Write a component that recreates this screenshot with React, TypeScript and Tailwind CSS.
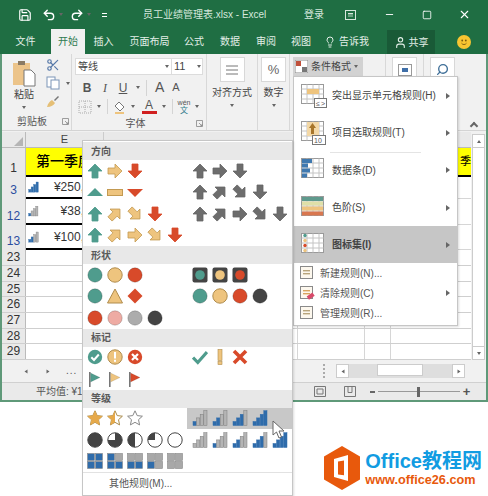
import type { ReactNode } from 'react';
import { Lightbulb, Minus, Redo2, Save, Scissors, Search, Square, Undo2, User, X } from 'lucide-react';

const GREEN = '#4f9c8d';
const YELLOW = '#eec47e';
const RED = '#d84a2a';
const GREY = '#6d6d6d';
const BLUE = '#2f6cab';

const fontCjk = 'font-["Liberation_Sans","Noto_Sans_CJK_SC",sans-serif]';

const Caret = () => <span className="inline-block w-0 h-0 border-x-[2.5px] border-x-transparent border-t-[3px] border-t-[#666]" />;
const SideCaret = () => <span className="inline-block w-0 h-0 border-y-[3px] border-y-transparent border-l-[4px] border-l-[#666]" />;

const Arrow = ({ color, deg = 0 }: { color: string; deg?: number }) => {
  const edge = color === YELLOW ? '#c39a52' : color === GREY ? '#666' : color;
  return (
    <svg width="16" height="16" viewBox="0 0 16 16">
      <polygon
        points="8,1 15,8 11,8 11,15 5,15 5,8 1,8"
        fill={color}
        stroke={edge}
        strokeWidth="0.8"
        transform={'rotate(' + deg + ' 8 8)'}
      />
    </svg>
  );
};

const Tri = ({ color, down }: { color: string; down?: boolean }) => (
  <svg width="16" height="16" viewBox="0 0 16 16">
    <polygon points={down ? '0,5 16,5 8,13' : '8,4 16,12 0,12'} fill={color} />
  </svg>
);

const Dash = () => (
  <svg width="16" height="16" viewBox="0 0 16 16">
    <rect x="0.5" y="5.5" width="15" height="6" fill={YELLOW} stroke="#c39a52" />
  </svg>
);

const Dot = ({ color, edge = '#00000030' }: { color: string; edge?: string }) => (
  <svg width="16" height="16" viewBox="0 0 16 16">
    <circle cx="8" cy="8" r="7.2" fill={color} stroke={edge} strokeWidth="1" />
  </svg>
);

const Light = ({ color }: { color: string }) => (
  <svg width="16" height="16" viewBox="0 0 16 16">
    <rect x="0.5" y="0.5" width="15" height="15" rx="2" fill="#444" />
    <circle cx="8" cy="8" r="4.8" fill={color} />
  </svg>
);

const Flag = ({ color }: { color: string }) => (
  <svg width="14" height="16" viewBox="0 0 14 16">
    <rect x="1" y="1" width="1.6" height="15" fill="#777" />
    <polygon points="2.6,2 12,6.5 2.6,11" fill={color} stroke="#00000030" strokeWidth="0.5" />
  </svg>
);

const Star = ({ fill }: { fill: 'full' | 'half' | 'none' }) => (
  <svg width="16" height="16" viewBox="0 0 16 16">
    <polygon points="8,0.8 10.2,5.6 15.4,6.2 11.5,9.7 12.6,14.9 8,12.3 3.4,14.9 4.5,9.7 0.6,6.2 5.8,5.6" fill="#fff" stroke={fill === 'none' ? '#888' : '#a98a4a'} />
    {fill === 'full' && <polygon points="8,0.8 10.2,5.6 15.4,6.2 11.5,9.7 12.6,14.9 8,12.3 3.4,14.9 4.5,9.7 0.6,6.2 5.8,5.6" fill="#e6a94a" />}
    {fill === 'half' && <polygon points="8,0.8 8,12.3 3.4,14.9 4.5,9.7 0.6,6.2 5.8,5.6" fill="#e6a94a" />}
  </svg>
);

const Harvey = ({ d }: { d: string | null }) => (
  <svg width="16" height="16" viewBox="0 0 16 16">
    <circle cx="8" cy="8" r="7.2" fill={d === 'full' ? '#444' : '#fff'} stroke="#444" />
    {d && d !== 'full' && <path d={d} fill="#444" />}
  </svg>
);

const Quad = ({ on }: { on: number }) => {
  const fills = [
    on >= 3 ? BLUE : '#a8a8a8',
    on >= 4 ? BLUE : '#a8a8a8',
    on >= 2 ? BLUE : '#a8a8a8',
    on >= 1 ? BLUE : '#a8a8a8',
  ];
  const spots = [
    [0.5, 0.5],
    [8.5, 0.5],
    [8.5, 8.5],
    [0.5, 8.5],
  ];
  return (
    <svg width="16" height="16" viewBox="0 0 16 16">
      {spots.map((s, i) => (
        <rect key={i} x={s[0]} y={s[1]} width="7" height="7" fill={fills[i]} stroke="#888" strokeWidth="0.6" />
      ))}
    </svg>
  );
};

const Bars = ({ on, size = 15 }: { on: number; size?: number }) => (
  <svg width={size} height={size} viewBox="0 0 16 16">
    {[0, 1, 2, 3].map((i) => {
      const h = 4 + i * 3.6;
      return <rect key={i} x={1 + i * 3.6} y={15.5 - h} width="3.2" height={h} fill={i < on ? BLUE : '#b4b4b4'} stroke={i < on ? BLUE : '#7c7c7c'} strokeWidth="0.5" />;
    })}
  </svg>
);

const Check = () => (
  <svg width="16" height="16" viewBox="0 0 16 16">
    <circle cx="8" cy="8" r="7.2" fill={GREEN} />
    <path d="M4.3 8.2 7 11l4.8-5.5" fill="none" stroke="#fff" strokeWidth="2" />
  </svg>
);
const Bang = () => (
  <svg width="16" height="16" viewBox="0 0 16 16">
    <circle cx="8" cy="8" r="7.2" fill={YELLOW} stroke="#b08c4c" />
    <rect x="7" y="3" width="2" height="6.5" fill="#fff" />
    <rect x="7" y="10.8" width="2" height="2" fill="#fff" />
  </svg>
);
const Cross = () => (
  <svg width="16" height="16" viewBox="0 0 16 16">
    <circle cx="8" cy="8" r="7.2" fill={RED} />
    <path d="M5 5l6 6M11 5l-6 6" stroke="#fff" strokeWidth="2.2" />
  </svg>
);

// 方向 ------------------------------------------------------------
const c = (color: string, deg: number) => <Arrow color={color} deg={deg} />;
const directionLeft: ReactNode[][] = [
  [c(GREEN, 0), c(YELLOW, 90), c(RED, 180)],
  [<Tri color={GREEN} />, <Dash />, <Tri color={RED} down />],
  [c(GREEN, 0), c(YELLOW, 45), c(YELLOW, 135), c(RED, 180)],
  [c(GREEN, 0), c(YELLOW, 45), c(YELLOW, 90), c(YELLOW, 135), c(RED, 180)],
];
const directionRight: ReactNode[][] = [
  [c(GREY, 0), c(GREY, 90), c(GREY, 180)],
  [c(GREY, 0), c(GREY, 45), c(GREY, 135), c(GREY, 180)],
  [c(GREY, 0), c(GREY, 45), c(GREY, 90), c(GREY, 135), c(GREY, 180)],
  [],
];

// 形状 ------------------------------------------------------------
const triangle = (
  <svg width="16" height="16" viewBox="0 0 16 16">
    <polygon points="8,1 15.5,15 0.5,15" fill={YELLOW} stroke="#b08c4c" />
  </svg>
);
const diamond = (
  <svg width="16" height="16" viewBox="0 0 16 16">
    <polygon points="8,0.5 15.5,8 8,15.5 0.5,8" fill={RED} />
  </svg>
);
const shapeLeft: ReactNode[][] = [
  [<Dot color={GREEN} />, <Dot color={YELLOW} edge="#b08c4c" />, <Dot color={RED} />],
  [<Dot color={GREEN} />, triangle, diamond],
  [<Dot color={RED} />, <Dot color="#eeaba3" />, <Dot color="#acacac" />, <Dot color="#444" />],
];
const shapeRight: ReactNode[][] = [
  [<Light color={GREEN} />, <Light color={YELLOW} />, <Light color={RED} />],
  [<Dot color={GREEN} />, <Dot color={YELLOW} edge="#b08c4c" />, <Dot color={RED} />, <Dot color="#444" />],
  [],
];

// 标记 ------------------------------------------------------------
const plainCheck = (
  <svg width="16" height="16" viewBox="0 0 16 16">
    <path d="M1 8.5 5.8 13.5 15 3" fill="none" stroke={GREEN} strokeWidth="3.2" />
  </svg>
);
const plainBang = (
  <svg width="16" height="16" viewBox="0 0 16 16">
    <rect x="6" y="0.5" width="4" height="11" fill={YELLOW} stroke="#b08c4c" strokeWidth="0.6" />
    <rect x="6" y="12.6" width="4" height="3" fill={YELLOW} stroke="#b08c4c" strokeWidth="0.6" />
  </svg>
);
const plainCross = (
  <svg width="16" height="16" viewBox="0 0 16 16">
    <path d="M2 2l12 12M14 2 2 14" stroke={RED} strokeWidth="3.6" />
  </svg>
);
const markLeft: ReactNode[][] = [
  [<Check />, <Bang />, <Cross />],
  [<Flag color={GREEN} />, <Flag color={YELLOW} />, <Flag color={RED} />],
];
const markRight: ReactNode[][] = [[plainCheck, plainBang, plainCross], []];

// 等级 ------------------------------------------------------------
const levelLeft: ReactNode[][] = [
  [<Star fill="full" />, <Star fill="half" />, <Star fill="none" />],
  [
    <Harvey d="full" />,
    <Harvey d="M8 8V.8A7.2 7.2 0 1 1 .8 8Z" />,
    <Harvey d="M8 .8a7.2 7.2 0 0 0 0 14.4Z" />,
    <Harvey d="M8 8V.8A7.2 7.2 0 0 0 .8 8Z" />,
    <Harvey d={null} />,
  ],
  [<Quad on={4} />, <Quad on={3} />, <Quad on={2} />, <Quad on={1} />, <Quad on={0} />],
];
const levelRight: ReactNode[][] = [
  [<Bars on={1} size={16} />, <Bars on={2} size={16} />, <Bars on={3} size={16} />, <Bars on={4} size={16} />],
  [<Bars on={0} size={16} />, <Bars on={1} size={16} />, <Bars on={2} size={16} />, <Bars on={3} size={16} />, <Bars on={4} size={16} />],
  [],
];

const IconRow = ({ items }: { items: ReactNode[] }) => (
  <div className="flex w-[100px]">
    {items.map((it, i) => (
      <div key={i} className="w-5 flex items-center justify-center">
        {it}
      </div>
    ))}
  </div>
);

const IconSet = ({ title, left, right, hoverRow }: { title: string; left: ReactNode[][]; right: ReactNode[][]; hoverRow?: number }) => (
  <>
    <div className="h-[18px] bg-[#e8e8e8] pl-[8px] flex items-center text-[10px] font-semibold text-[#5a5a5a]">{title}</div>
    <div className="flex flex-col">
      {left.map((row, i) => (
        <div key={i} className="flex h-[21.5px] pl-[2px]">
          <IconRow items={row} />
          <div className={'flex items-center pl-[3px] w-[105px] ml-auto ' + (hoverRow === i ? 'bg-[#c8c8c8]' : '')}>
            <IconRow items={right[i]} />
          </div>
        </div>
      ))}
    </div>
  </>
);

// 右侧菜单的小表格图标 ------------------------------------------------
const MiniTable = ({ kind }: { kind: 'highlight' | 'top' | 'bar' | 'scale' | 'icons' }) => (
  <svg width="26" height="26" viewBox="0 0 26 26">
    <rect x="0.5" y="1.5" width="22" height="19" fill="#fff" stroke="#9a9a9a" />
    {[6, 12, 18].map((x) => (
      <line key={x} x1={x} y1="1.5" x2={x} y2="20.5" stroke="#c4c4c4" />
    ))}
    {[6, 11, 16].map((y) => (
      <line key={y} x1="0.5" y1={y} x2="22.5" y2={y} stroke="#c4c4c4" />
    ))}
    {kind === 'highlight' && <rect x="6" y="6" width="12" height="5" fill="#eec47e" />}
    {kind === 'highlight' && (
      <>
        <rect x="13.5" y="15.5" width="12" height="9" fill="#fff" stroke="#777" />
        <text x="15" y="23" fontSize="7" fill="#555">≤</text>
        <text x="20" y="23" fontSize="7" fill="#555">&gt;</text>
      </>
    )}
    {kind === 'top' && <rect x="6" y="2" width="12" height="14" fill="#f3d8a6" />}
    {kind === 'top' && <polygon points="11.5,3 15,8 13,8 13,14 10,14 10,8 8,8" fill="#a8762a" />}
    {kind === 'top' && (
      <>
        <rect x="11.5" y="15.5" width="13" height="9" fill="#fff" stroke="#777" />
        <text x="13" y="23" fontSize="7" fill="#555">10</text>
      </>
    )}
    {kind === 'bar' && (
      <>
        <rect x="1" y="2" width="10" height="4" fill="#3f79b0" />
        <rect x="1" y="6.5" width="6" height="4" fill="#3f79b0" />
        <rect x="1" y="11.5" width="8" height="4" fill="#3f79b0" />
        <rect x="1" y="16.5" width="5" height="4" fill="#3f79b0" />
      </>
    )}
    {kind === 'scale' && (
      <>
        <rect x="1" y="2" width="21" height="4" fill="#5f9a8d" />
        <rect x="1" y="6.5" width="21" height="4" fill="#dfe0a8" />
        <rect x="1" y="11.5" width="21" height="4" fill="#eec47e" />
        <rect x="1" y="16.5" width="21" height="4" fill="#d9774f" />
      </>
    )}
    {kind === 'icons' &&
      [3, 8, 13, 18].map((y, i) => <circle key={y} cx="4" cy={y + 0.5} r="1.7" fill={[GREEN, YELLOW, RED, YELLOW][i]} />)}
  </svg>
);

const SmallDoc = ({ erase }: { erase?: boolean }) => (
  <svg width="16" height="16" viewBox="0 0 16 16">
    <rect x="1.5" y="1.5" width="12" height="12" fill="#fdf8ee" stroke="#8a8a8a" />
    <rect x="4" y="5" width="7" height="1.4" fill={erase ? '#d9a560' : '#b9a57c'} />
    <rect x="4" y="8" width="7" height="1.4" fill={erase ? '#d9a560' : '#b9a57c'} />
    {erase && <rect x="8" y="9.5" width="7" height="4" transform="rotate(-35 11 11)" fill="#d84a6a" />}
  </svg>
);

const BigItem = ({ kind, label, active }: { kind: 'highlight' | 'top' | 'bar' | 'scale' | 'icons'; label: string; active?: boolean }) => (
  <div className={'flex items-center h-[37.3px] pl-[7px] pr-[7px] ' + (active ? 'bg-[#c6c6c6]' : '')}>
    <MiniTable kind={kind} />
    <span className={'ml-[5px] text-[10px] text-[#444] whitespace-nowrap ' + (active ? 'font-semibold' : '')}>{label}</span>
    <span className="ml-auto flex">
      <SideCaret />
    </span>
  </div>
);

const SmallItem = ({ label, erase, more }: { label: string; erase?: boolean; more?: boolean }) => (
  <div className="flex items-center h-5 pl-[5px] pr-[7px]">
    <SmallDoc erase={erase} />
    <span className="ml-[5px] text-[10px] text-[#555] whitespace-nowrap">{label}</span>
    {more && (
      <span className="ml-auto flex">
        <SideCaret />
      </span>
    )}
  </div>
);

// 功能区 --------------------------------------------------------------
const tabs = [
  { label: '文件', w: 'w-[51px]' },
  { label: '开始', w: 'w-[34px]', active: true },
  { label: '插入', w: 'w-[37px]' },
  { label: '页面布局', w: 'w-[55px]' },
  { label: '公式', w: 'w-[34px]' },
  { label: '数据', w: 'w-[38px]' },
  { label: '审阅', w: 'w-[34px]' },
  { label: '视图', w: 'w-[36px]' },
];

const Launcher = () => (
  <svg width="7" height="7" viewBox="0 0 7 7" className="shrink-0">
    <path d="M.5 6.5V.5h6v6zM3 3l3 3M6 4v2H4" fill="none" stroke="#888" strokeWidth="0.8" />
  </svg>
);

const GroupLabel = ({ text, launcher, className }: { text: string; launcher?: boolean; className?: string }) => (
  <div className={'h-[17px] flex items-center text-[10px] text-[#555] ' + (className ?? '')}>
    <span className="flex-1 text-center">{text}</span>
    {launcher && <Launcher />}
  </div>
);

const BigButton = ({ children, label }: { children: ReactNode; label: string }) => (
  <div className="flex flex-col items-center h-full">
    <div className="w-[25px] h-[25px] mt-[3px] bg-white border border-[#d8d8d8] flex items-center justify-center text-[#666]">{children}</div>
    <span className="mt-[4px] text-[10px] leading-[14px] text-[#444] whitespace-nowrap">{label}</span>
    <span className="mt-[4px] flex">
      <Caret />
    </span>
  </div>
);

const columnWidths = ['w-[78px]', 'w-[80px]', 'w-[79px]', 'w-[17px]', 'w-[18px]', 'w-[67px]', 'w-[26px]'];
const plainRows = ['h-[16px]', 'h-[16px]', 'h-[15px]', 'h-[16px]', 'h-[16px]', 'h-[15px]', 'h-[16px]'];

const DataRow = ({ n, h, on, value, pad }: { n: number; h: string; on: number; value: string; pad: string }) => (
  <div className={'flex bg-white ' + h}>
    <div className="w-[24px] bg-[#e9e9e9] border-r border-[#bbb] flex items-end justify-center text-[12px] text-[#2b4da0]">{n}</div>
    <div className="w-[78px] border-b-2 border-black flex items-center pl-[2px] overflow-hidden shrink-0">
      <Bars on={on} size={12} />
      <span className={'text-[12px] text-[#333] whitespace-nowrap ' + pad}>{value}</span>
    </div>
    <div className="flex-1 border-b border-[#d6d6d6]" />
  </div>
);

export default function App() {
  return (
    <div className={'relative w-[488px] h-[496px] bg-white overflow-hidden ' + fontCjk}>
      {/* Excel 窗口 */}
      <div className="h-[402px] flex flex-col border-x-2 border-b-2 border-[#217346]/70 bg-[#f1f1f1]">
        <div className="h-[29px] -mx-[2px] bg-[#1f6e43] flex items-center text-white shrink-0">
          <Save size={14} className="ml-[18px] shrink-0" strokeWidth={2} />
          <Undo2 size={14} className="ml-[10px] shrink-0" strokeWidth={2.4} />
          <span className="ml-[3px] flex"><Caret /></span>
          <Redo2 size={14} className="ml-[7px] shrink-0" strokeWidth={2.4} />
          <span className="ml-[3px] flex"><Caret /></span>
          <span className="ml-[11px] w-[5px] border-y border-white h-[4px] shrink-0" />
          <span className="ml-[36px] w-[126px] text-[10px] text-[#d6e8dd] whitespace-nowrap shrink-0">员工业绩管理表.xlsx - Excel</span>
          <span className="ml-[35px] text-[10px] text-[#d6e8dd] whitespace-nowrap shrink-0">登录</span>
          <span className="ml-[21px] w-[11px] h-[10px] border border-[#d6e8dd] flex items-center justify-center shrink-0">
            <span className="w-[5px] h-[4px] border-t border-[#d6e8dd] bg-[#d6e8dd]/40" />
          </span>
          <Minus size={11} className="ml-[28px] shrink-0" />
          <Square size={10} className="ml-[27px] shrink-0" />
          <X size={13} className="ml-[26px] shrink-0" />
        </div>
        <div className="h-[25px] -mx-[2px] bg-[#1f6e43] flex items-end text-[10px] text-[#e3efe8] shrink-0">
          {tabs.map((t) => (
            <div key={t.label} className={t.w + ' h-[25px] flex items-center justify-center ' + (t.active ? 'bg-[#f1f1f1] text-[#2f7a50]' : '')}>
              {t.label}
            </div>
          ))}
          <div className="w-[64px] h-[25px] flex items-center pl-[5px] gap-[3px]">
            <Lightbulb size={12} />
            <span>告诉我</span>
          </div>
          <div className="ml-[4px] w-[48px] h-[24px] bg-[#195a37] flex items-center justify-center gap-[2px]">
            <User size={13} />
            <span>共享</span>
          </div>
          <div className="ml-[22px] mb-[5px] w-[14px] h-[14px] rounded-full bg-[#f7c531] flex items-center justify-center">
            <svg width="10" height="10" viewBox="0 0 10 10">
              <circle cx="3.2" cy="3.5" r="0.9" fill="#7a5b10" />
              <circle cx="6.8" cy="3.5" r="0.9" fill="#7a5b10" />
              <path d="M2.5 6.2c1.2 1.8 3.8 1.8 5 0" fill="none" stroke="#7a5b10" strokeWidth="0.9" />
            </svg>
          </div>
        </div>

        {/* 功能区 */}
        <div className="h-[77px] flex border-b border-[#d4d4d4] shrink-0">
          <div className="w-[70px] flex flex-col border-r border-[#d8d8d8]">
            <div className="flex-1 flex">
              <div className="w-[44px] flex flex-col items-center">
                <svg width="24" height="28" viewBox="0 0 24 28" className="mt-[6px]">
                  <rect x="1" y="3" width="17" height="22" fill="#ecc48a" />
                  <rect x="6" y="1" width="7" height="4" fill="#8a7a64" />
                  <path d="M12 10h7l4 4v12H12z" fill="#fff" stroke="#777" />
                </svg>
                <span className="text-[10px] leading-[14px] text-[#444]">粘贴</span>
                <span className="mt-[4px] flex"><Caret /></span>
              </div>
              <div className="flex-1 flex flex-col pt-[4px] gap-[3px]">
                <Scissors size={14} className="text-[#5678a8]" />
                <div className="flex items-center gap-[6px] h-[16px]">
                  <svg width="14" height="14" viewBox="0 0 14 14">
                    <rect x="1" y="1" width="8" height="10" fill="#fff" stroke="#7d96b8" />
                    <rect x="5" y="4" width="8" height="9" fill="#fff" stroke="#7d96b8" />
                  </svg>
                  <Caret />
                </div>
                <svg width="14" height="14" viewBox="0 0 14 14">
                  <path d="M1 13c1-4 3-6 5-7l3 3c-1 2-4 4-8 4Z" fill="#e5bf76" />
                  <path d="M8 6l4-4 1 1-4 4Z" fill="#777" />
                </svg>
              </div>
            </div>
            <GroupLabel text="剪贴板" launcher className="pr-[2px]" />
          </div>

          <div className="w-[135px] flex flex-col border-r border-[#d8d8d8] pl-[3px]">
            <div className="flex-1 flex flex-col">
              <div className="mt-[4px] w-[128px] h-[17px] bg-white border border-[#dcdcdc] flex items-center text-[10px] text-[#444]">
                <span className="pl-[2px] w-[89px]">等线</span>
                <Caret />
                <span className="ml-[2px] pl-[2px] h-full border-l border-[#dcdcdc] w-[26px] text-[11px] leading-[15px]">11</span>
                <Caret />
              </div>
              <div className="mt-[3px] h-[19px] flex items-center text-[12px] text-[#555]">
                <span className="w-[18px] ml-[3px] text-center font-bold font-['Liberation_Sans']">B</span>
                <span className="w-[18px] text-center italic font-['Liberation_Serif']">I</span>
                <span className="w-[18px] text-center underline font-['Liberation_Sans']">U</span>
                <span className="ml-[4px] flex"><Caret /></span>
                <span className="ml-[6px] h-[16px] border-l border-[#d4d4d4]" />
                <span className="ml-[8px] text-[14px] font-['Liberation_Sans']">A</span>
                <span className="ml-[8px] text-[11px] font-['Liberation_Sans']">A</span>
              </div>
              <div className="h-[19px] flex items-center text-[#555]">
                <svg width="14" height="14" viewBox="0 0 14 14" className="ml-[3px]">
                  <path d="M1 1h12v12H1zM7 1v12M1 7h12" fill="none" stroke="#aaa" strokeDasharray="1 1" />
                </svg>
                <span className="ml-[5px] flex"><Caret /></span>
                <span className="ml-[6px] h-[15px] border-l border-[#d4d4d4]" />
                <svg width="14" height="14" viewBox="0 0 14 14" className="ml-[4px]">
                  <path d="M3 6l4-4 5 5-4 4Z" fill="#fff" stroke="#777" />
                  <path d="M3 13h9" stroke="#eec47e" strokeWidth="2" />
                </svg>
                <span className="ml-[5px] flex"><Caret /></span>
                <div className="ml-[8px] flex flex-col items-center w-[12px] h-[14px] leading-[11px]">
                  <span className="text-[12px] font-['Liberation_Sans']">A</span>
                  <span className="w-[15px] h-[3px] bg-[#d02020] shrink-0" />
                </div>
                <span className="ml-[7px] flex"><Caret /></span>
                <span className="ml-[6px] h-[15px] border-l border-[#d4d4d4]" />
                <div className="ml-[4px] w-[14px] flex flex-col items-center">
                  <span className="text-[7px] leading-[8px]">wén</span>
                  <span className="text-[8px] leading-[8px] text-[#2f7a8a]">文</span>
                </div>
                <span className="ml-[4px] flex"><Caret /></span>
              </div>
            </div>
            <GroupLabel text="字体" launcher className="pr-[3px]" />
          </div>

          <div className="w-[51px] flex flex-col border-r border-[#d8d8d8]">
            <div className="flex-1">
              <BigButton label="对齐方式">
                <svg width="12" height="10" viewBox="0 0 12 10">
                  <path d="M0 1h12M0 5h12M0 9h12" stroke="#777" />
                </svg>
              </BigButton>
            </div>
          </div>
          <div className="w-[32px] flex flex-col border-r border-[#d8d8d8]">
            <BigButton label="数字">
              <span className="text-[13px] font-['Liberation_Sans']">%</span>
            </BigButton>
          </div>
          <div className="w-[96px] border-r border-[#d8d8d8]" />
          <div className="w-[38px] flex justify-center border-r border-[#d8d8d8]">
            <div className="w-[25px] h-[25px] mt-[3px] bg-white border border-[#d8d8d8] flex items-center justify-center">
              <svg width="14" height="12" viewBox="0 0 14 12">
                <rect x="0.5" y="0.5" width="13" height="11" fill="#fff" stroke="#9a9a9a" />
                <rect x="4" y="4" width="6" height="4" fill="#3f6fa8" />
              </svg>
            </div>
          </div>
          <div className="flex-1 pl-[6px]">
            <div className="w-[25px] h-[25px] mt-[3px] bg-white border border-[#d8d8d8] flex items-center justify-center">
              <Search size={13} className="text-[#3f6f98] -scale-x-100" strokeWidth={2.5} />
            </div>
            <div className="mt-[41px] ml-[41px] w-[6px] h-[6px] border-l-2 border-t-2 border-[#666] rotate-45" />
          </div>
        </div>

        {/* 工作表 */}
        <div className="flex-1 flex min-h-0">
          <div className="flex-1 flex flex-col pt-[1px] min-w-0">
            <div className="h-[16px] flex bg-[#e9e9e9] border-b border-[#bbb] text-[11px] text-[#444]">
              <div className="w-[24px] border-r border-[#bbb] flex items-end justify-end">
                <span className="w-0 h-0 border-l-[9px] border-l-transparent border-b-[9px] border-b-[#b5b5b5] mr-[2px] mb-[1px]" />
              </div>
              <div className="w-[78px] text-center border-r border-[#ccc] leading-[15px] font-['Liberation_Sans']">E</div>
            </div>
            <div className="h-[29px] flex border-b-2 border-black">
              <div className="w-[24px] -mb-[2px] bg-[#e9e9e9] border-r border-[#bbb] flex items-end justify-center text-[12px] text-[#333]">1</div>
              <div className="flex-1 bg-[#ffff00] flex justify-between overflow-hidden">
                <span className="ml-[10px] text-[14px] font-medium text-black whitespace-nowrap leading-[27px]">第一季度</span>
                <span className="text-[11px] text-black leading-[27px]">季</span>
              </div>
            </div>
            <DataRow n={3} h="h-[22px]" on={4} value="¥250,000" pad="ml-[15px]" />
            <DataRow n={12} h="h-[26px]" on={1} value="¥38,000" pad="ml-[22px]" />
            <DataRow n={13} h="h-[25px]" on={2} value="¥100,000" pad="ml-[15px]" />
            {plainRows.map((h, i) => (
              <div key={i} className={'flex border-b border-[#cfcfcf] ' + h}>
                <div className="w-[24px] bg-[#e9e9e9] border-r border-[#bbb] text-center text-[12px] leading-[15px] text-[#333]">{23 + i}</div>
                <div className="flex-1 flex bg-white">
                  {columnWidths.map((w, j) => (
                    <div key={j} className={w + ' border-r border-[#d6d6d6]'} />
                  ))}
                </div>
              </div>
            ))}
            <div className="h-[22px] flex items-center text-[#555]">
              <span className="ml-[22px] flex rotate-90"><Caret /></span>
              <span className="ml-[18px] flex -rotate-90"><Caret /></span>
              <span className="ml-[16px] text-[10px] tracking-[1px] leading-none">...</span>
              <span className="ml-[246px] w-[3px] h-[14px] border-l-2 border-dotted border-[#aaa]" />
              <span className="ml-[10px] w-[13px] h-[14px] bg-white border border-[#ccc] flex items-center justify-center">
                <span className="flex rotate-90"><Caret /></span>
              </span>
              <div className="w-[103px] h-[14px] bg-[#dedede] pl-[28px]">
                <div className="w-[46px] h-[12px] bg-white border border-[#ccc]" />
              </div>
              <span className="w-[13px] h-[14px] bg-white border border-[#ccc] flex items-center justify-center">
                <span className="flex -rotate-90"><Caret /></span>
              </span>
            </div>
          </div>
          <div className="w-[15px] flex flex-col items-center pt-[3px] pb-[22px]">
            <div className="w-[13px] flex-1 bg-white border-x border-[#ccc] flex flex-col items-center justify-between">
              <div className="w-[13px] h-[14px] -mx-px bg-white border border-[#ccc] flex items-center justify-center">
                <span className="flex rotate-180"><Caret /></span>
              </div>
              <div className="w-[13px] h-[14px] -mx-px bg-white border border-[#ccc] flex items-center justify-center">
                <Caret />
              </div>
            </div>
          </div>
        </div>

        {/* 状态栏 */}
        <div className="h-[18px] flex items-center bg-[#eaeaea] border-t border-[#d0d0d0] text-[10px] text-[#555] shrink-0">
          <span className="ml-[34px] whitespace-nowrap">平均值: ¥1</span>
          <svg width="12" height="11" viewBox="0 0 12 11" className="ml-[231px]">
            <path d="M.5.5h11v10H.5zM3 3h6v5H3z" fill="none" stroke="#777" />
          </svg>
          <svg width="12" height="11" viewBox="0 0 12 11" className="ml-[18px]">
            <path d="M.5.5h11v10H.5zM4 .5v6h4v-6" fill="none" stroke="#777" />
          </svg>
          <span className="ml-[14px] w-[5px] h-[2px] bg-[#666]" />
          <div className="ml-[3px] w-[82px] h-px bg-[#999] flex justify-center items-center">
            <span className="w-[3px] h-[10px] bg-[#666]" />
          </div>
          <span className="ml-[3px] text-[13px] font-bold leading-none">+</span>
        </div>
      </div>

      {/* 水印 */}
      <div className="h-[94px] flex items-end justify-end pr-[6px] pb-[6px]">
        <svg width="36" height="44" viewBox="0 0 36 44" className="mr-[5px]">
          <polygon points="18,0 36,10.5 36,33.5 18,44 0,33.5 0,10.5" fill="#e8590c" />
          <path d="M10 13l14-4v26l-14-4zM14 15.5v13l6 .8V14.5z" fill="#fff" fillRule="evenodd" />
        </svg>
        <div className="flex flex-col items-start mb-[2px]">
          <span className="text-[20px] leading-[24px] font-bold text-[#119ce2] whitespace-nowrap font-['Liberation_Sans','Noto_Sans_CJK_SC',sans-serif]">Office教程网</span>
          <span className="text-[12.7px] leading-[15px] font-bold text-[#e8590c] whitespace-nowrap font-['Liberation_Sans',sans-serif]">www.office26.com</span>
        </div>
      </div>

      {/* 条件格式按钮与下拉菜单 */}
      <div className="absolute left-[293px] top-[57px] w-[70px] h-[19px] bg-[#d2d2d2] flex items-center pl-[2px] gap-[3px] text-[10px] text-[#444]">
        <svg width="13" height="13" viewBox="0 0 13 13">
          <rect width="13" height="13" fill="#fff" stroke="#888" />
          <rect x="1" y="1" width="5" height="5" fill="#c0503a" />
          <rect x="7" y="7" width="5" height="5" fill="#777" />
        </svg>
        <span className="whitespace-nowrap">条件格式</span>
        <Caret />
      </div>

      <div className="absolute left-[293px] top-[76px] w-[165px] h-[250px] bg-white border border-[#c6c6c6] shadow-[1px_1px_2px_#0002]">
        <BigItem kind="highlight" label="突出显示单元格规则(H)" />
        <BigItem kind="top" label="项目选取规则(T)" />
        <div className="-mb-px mx-[36px] border-t border-[#e4e4e4]" />
        <BigItem kind="bar" label="数据条(D)" />
        <BigItem kind="scale" label="色阶(S)" />
        <BigItem kind="icons" label="图标集(I)" active />
        <SmallItem label="新建规则(N)..." />
        <SmallItem label="清除规则(C)" erase more />
        <SmallItem label="管理规则(R)..." />
      </div>

      <div className="absolute left-[82px] top-[140px] w-[211px] h-[356px] bg-white border border-[#c6c6c6] pt-[1px] shadow-[1px_1px_2px_#0002]">
        <IconSet title="方向" left={directionLeft} right={directionRight} />
        <IconSet title="形状" left={shapeLeft} right={shapeRight} />
        <IconSet title="标记" left={markLeft} right={markRight} />
        <IconSet title="等级" left={levelLeft} right={levelRight} hoverRow={0} />
        <div className="border-t border-[#e2e2e2] h-[22px] pl-[26px] flex items-center text-[10px] text-[#555]">其他规则(M)...</div>
      </div>

      <svg width="14" height="19" viewBox="0 0 14 19" className="absolute left-[272px] top-[420px]">
        <path d="M1 1v14l3.5-3 2.5 6 2.5-1-2.5-6h5Z" fill="#fff" stroke="#666" />
      </svg>
    </div>
  );
}
